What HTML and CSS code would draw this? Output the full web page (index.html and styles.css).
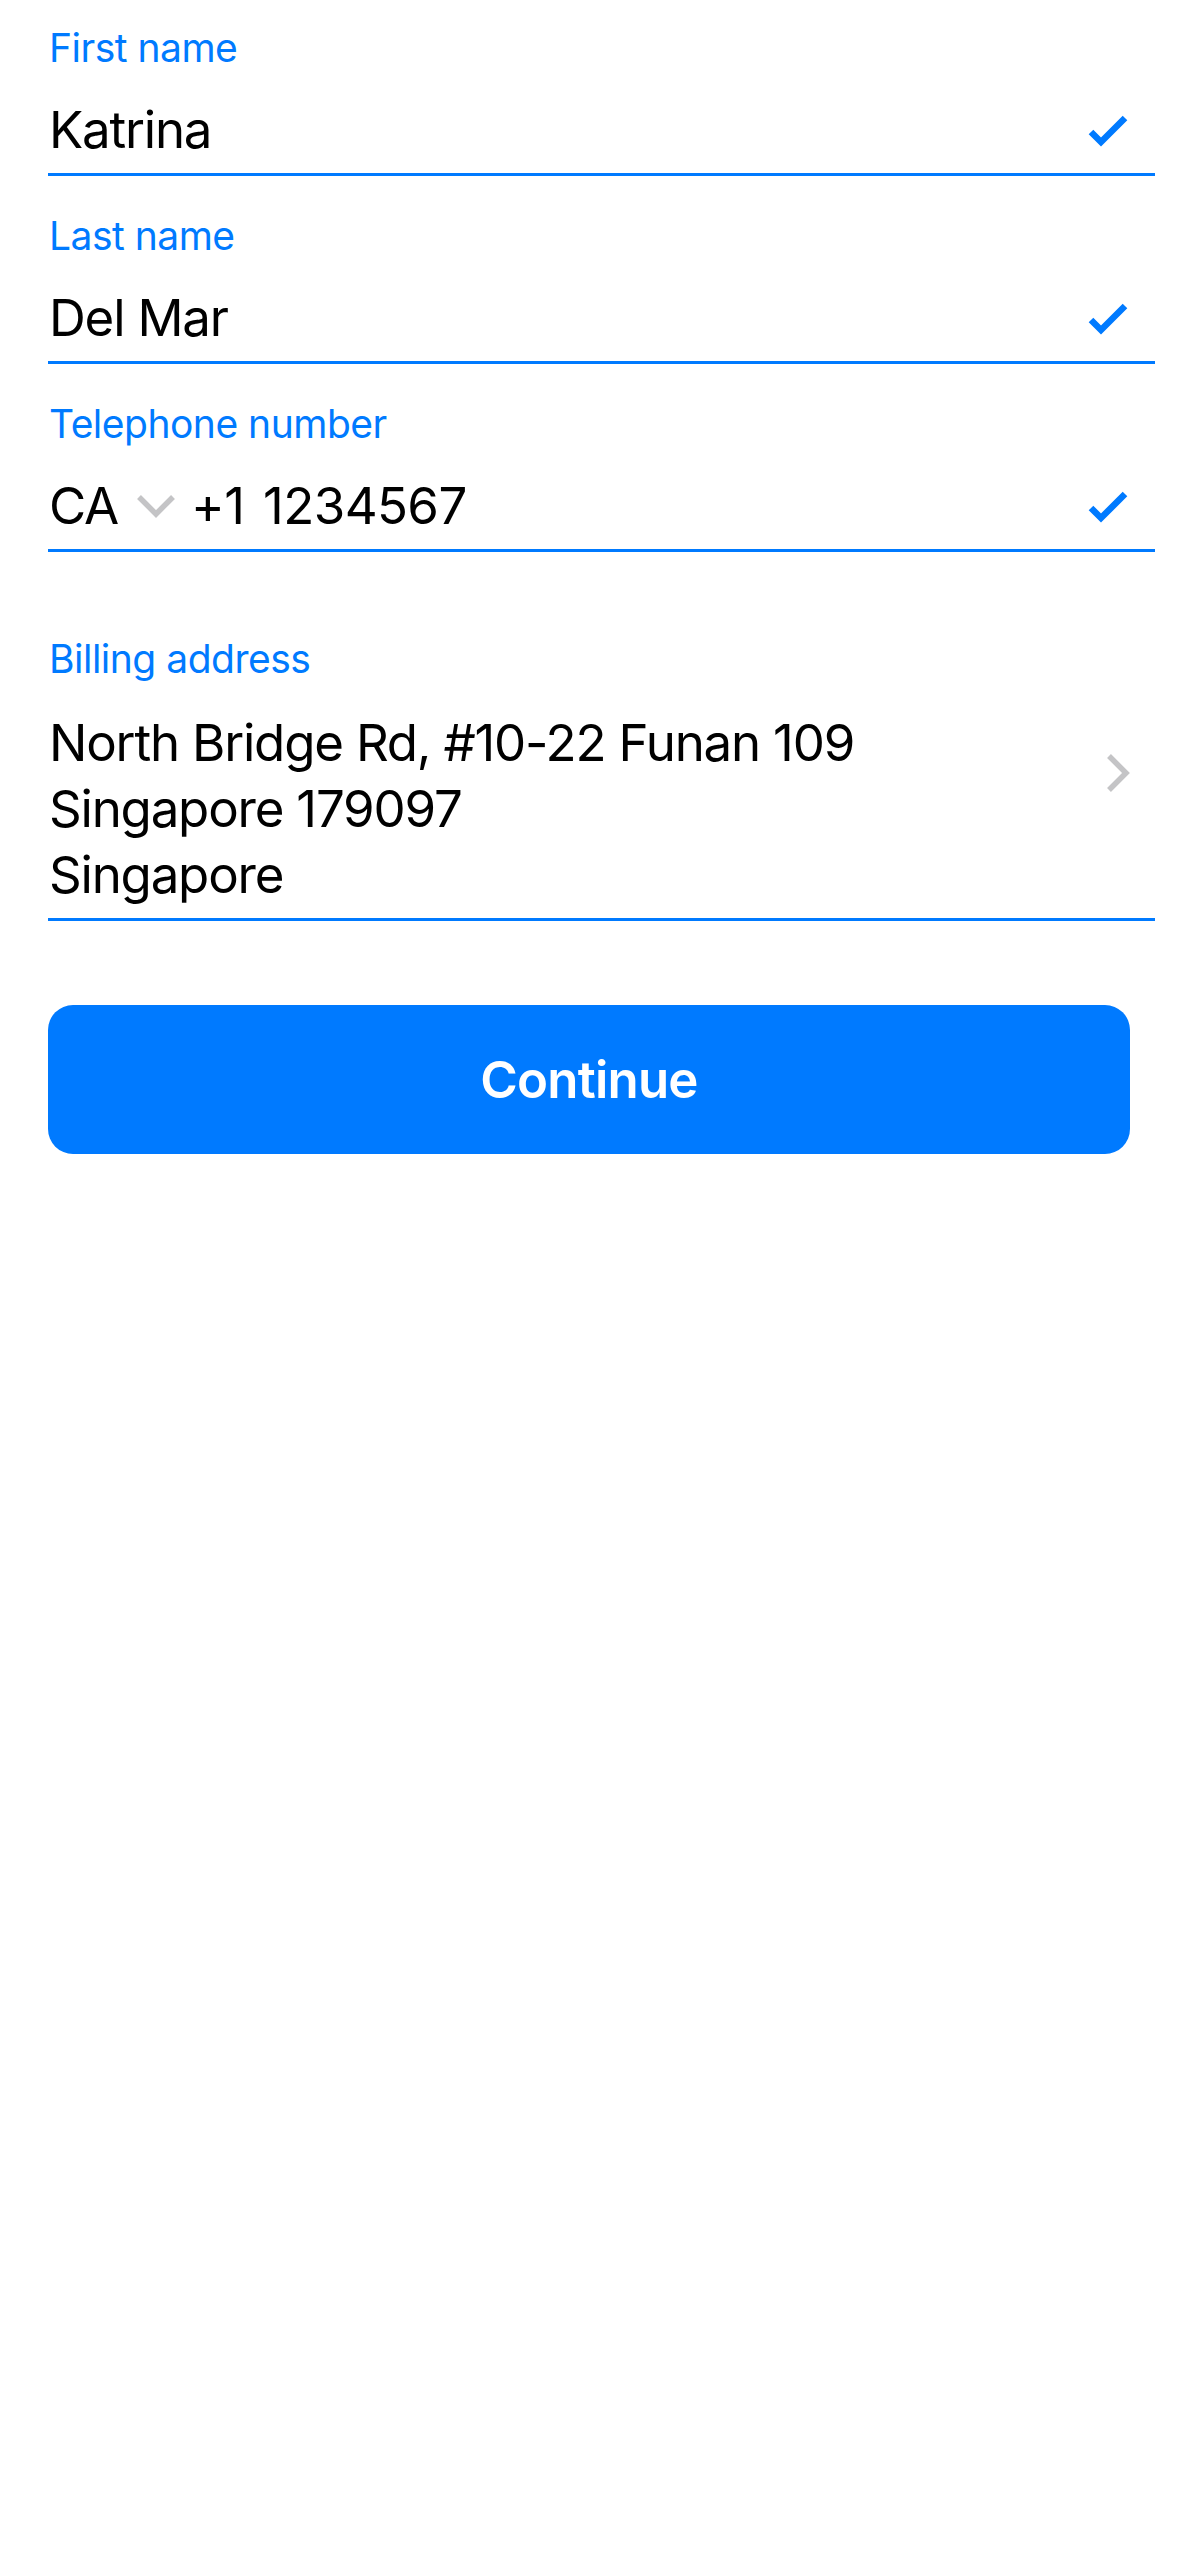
FILE: index.html
```html
<!DOCTYPE html>
<html lang="en">
<head>
<meta charset="utf-8">
<title>Billing details</title>
<link rel="stylesheet" href="styles.css">
</head>
<body>
<main class="form">
  <div class="field">
    <div class="label">First name</div>
    <div class="row">
      <span class="value">Katrina</span>
      <svg class="check" viewBox="0 0 42 34" width="42" height="34"><path d="M4 19 L14 29 L38 5" fill="none" stroke="#007aff" stroke-width="6.5"/></svg>
    </div>
  </div>
  <div class="field">
    <div class="label">Last name</div>
    <div class="row">
      <span class="value">Del Mar</span>
      <svg class="check" viewBox="0 0 42 34" width="42" height="34"><path d="M4 19 L14 29 L38 5" fill="none" stroke="#007aff" stroke-width="6.5"/></svg>
    </div>
  </div>
  <div class="field">
    <div class="label">Telephone number</div>
    <div class="row">
      <span class="value country">CA</span>
      <svg class="down" viewBox="0 0 40 24" width="40" height="24"><path d="M3 3 L20 20 L37 3" fill="none" stroke="#c4c4c6" stroke-width="5.5"/></svg>
      <span class="value phone">+1 1234567</span>
      <svg class="check" viewBox="0 0 42 34" width="42" height="34"><path d="M4 19 L14 29 L38 5" fill="none" stroke="#007aff" stroke-width="6.5"/></svg>
    </div>
  </div>
  <div class="field address">
    <div class="label">Billing address</div>
    <div class="row">
      <div class="value lines">North Bridge Rd, #10-22 Funan 109<br>Singapore 179097<br>Singapore</div>
      <svg class="next" viewBox="0 0 26 40" width="26" height="40"><path d="M4 3 L21 20 L4 37" fill="none" stroke="#c4c4c6" stroke-width="5.5"/></svg>
    </div>
  </div>
  <button class="continue" type="button">Continue</button>
</main>
</body>
</html>
```

FILE: styles.css
```css
* { box-sizing: border-box; }
html, body { margin: 0; padding: 0; background: #ffffff; }
body {
  font-family: Inter, "Noto Sans", "Liberation Sans", sans-serif;
  color: #000;
}
.form {
  display: flex;
  flex-direction: column;
  padding: 0 24px 0 48px;
}
.field {
  padding-top: 37px;
  padding-bottom: 13px;
  border-bottom: 3px solid #007aff;
}
.field:first-child { padding-top: 25px; }
.label {
  font-size: 39px;
  line-height: 46px;
  color: #007aff;
  letter-spacing: -0.5px;
  padding-left: 1px;
}
.row {
  display: flex;
  align-items: center;
  margin-top: 29px;
  height: 60px;
}
.value {
  font-size: 51px;
  line-height: 60px;
  letter-spacing: -1.2px;
  padding-left: 1px;
}
.row .value:first-child { flex: 0 0 auto; }
.row .phone { flex: 1 1 auto; letter-spacing: -0.6px; word-spacing: 5px; }
.row > .value:only-of-type { flex: 1 1 auto; }
.check { margin-right: 26px; flex: 0 0 auto; }
.down { margin: 0 14px 0 18px; flex: 0 0 auto; }
.address { padding-top: 84px; padding-bottom: 10px; }
.address .row {
  height: auto;
  align-items: flex-start;
  margin-top: 28px;
}
.lines {
  flex: 1 1 auto;
  line-height: 66px;
}
.next { margin: 43px 24px 0 0; flex: 0 0 auto; }
.continue {
  margin: 84px 25px 0 0;
  height: 149px;
  border: 0;
  border-radius: 25px;
  background: #007aff;
  color: #fff;
  font-family: Inter, "Noto Sans", "Liberation Sans", sans-serif;
  font-size: 51px;
  font-weight: 600;
  letter-spacing: -0.8px;
  padding: 0;
}
```
